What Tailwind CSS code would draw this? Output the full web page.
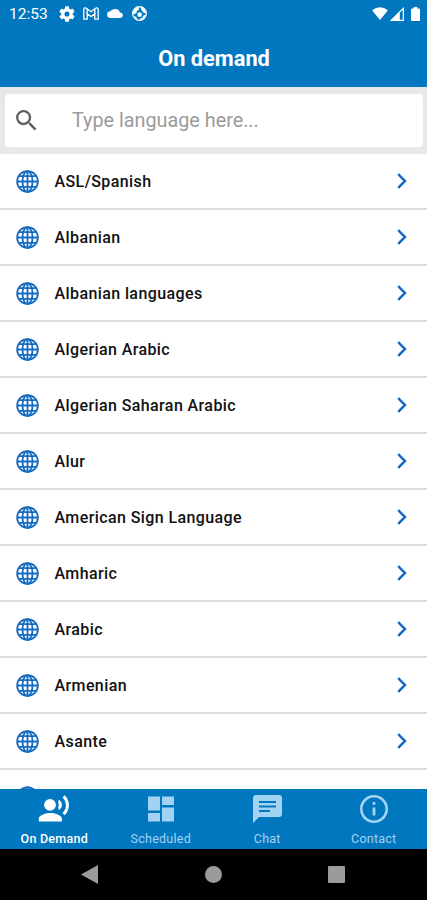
<!DOCTYPE html>
<html lang="en">
  <head>
    <meta charset="UTF-8" />
    <meta name="viewport" content="width=device-width, initial-scale=1.0" />
    <title>On demand</title>
    <script src="https://cdn.jsdelivr.net/npm/@tailwindcss/browser@4"></script>
  </head>

  <body class="bg-black font-['Roboto',sans-serif]">
    <svg class="hidden">
      <symbol id="globe" viewBox="0 0 24 24">
        <g fill="none" stroke="currentColor" stroke-width="1.9">
          <circle cx="12" cy="12" r="10.8" />
          <ellipse cx="12" cy="12" rx="5.2" ry="10.8" />
          <path d="M12 1.2v21.6M1.2 12h21.6M3.2 6.3h17.6M3.2 17.7h17.6" />
        </g>
      </symbol>
      <symbol id="chevron" viewBox="0 0 10 16">
        <path d="M1.2 1.2 8 8l-6.8 6.8" fill="none" stroke="currentColor" stroke-width="2.5" />
      </symbol>
    </svg>

    <div class="flex h-[900px] w-[427px] flex-col overflow-hidden">
      <header class="h-[87px] shrink-0 bg-[#0077be] text-white">
        <!-- Status bar -->
        <div class="flex h-7 items-center pr-[7px] pl-[9px]">
          <span class="w-[50px] text-[15.5px] leading-7">12:53</span>
          <svg class="size-4" viewBox="2 2 20 20" fill="currentColor">
            <path fill-rule="evenodd" d="M19.14 12.94c.04-.3.06-.61.06-.94s-.02-.64-.07-.94l2.03-1.58a.5.5 0 0 0 .12-.61l-1.92-3.32a.49.49 0 0 0-.59-.22l-2.39.96a7 7 0 0 0-1.62-.94l-.36-2.54A.48.48 0 0 0 13.92 2.4h-3.84a.48.48 0 0 0-.48.41l-.36 2.54c-.59.24-1.13.57-1.62.94l-2.39-.96a.48.48 0 0 0-.59.22L2.74 8.87a.47.47 0 0 0 .12.61l2.03 1.58a6 6 0 0 0 0 1.88l-2.03 1.58a.5.5 0 0 0-.12.61l1.92 3.32c.12.22.37.29.59.22l2.39-.96c.5.38 1.03.7 1.62.94l.36 2.54c.05.24.24.41.48.41h3.84c.24 0 .44-.17.47-.41l.36-2.54c.59-.24 1.13-.56 1.62-.94l2.39.96c.22.08.47 0 .59-.22l1.92-3.32a.47.47 0 0 0-.12-.61zM12 15.2a3.2 3.2 0 1 1 0-6.4 3.2 3.2 0 0 1 0 6.4z" />
          </svg>
          <svg class="mb-px ml-2 h-[13px] w-4" viewBox="0 0 16 13" fill="none" stroke="currentColor" stroke-width="1.3">
            <path d="M.8 2.2Q1.6.2 3.4 1.2L8 4.7l4.6-3.5q1.8-1 2.6 1v10h-3.4V6.7L8 9.6 4.2 6.7v5.5H.8z" />
            <path d="M4.2 2v5M11.8 2v5" />
          </svg>
          <svg class="mb-px ml-2 h-[9px] w-4" viewBox="0 0 24 16" preserveAspectRatio="none" fill="currentColor">
            <path d="M19.35 6.04A7.49 7.49 0 0 0 12 0C9.11 0 6.6 1.64 5.35 4.04A6 6 0 0 0 6 16h13a5 5 0 0 0 .35-9.96z" />
          </svg>
          <svg class="mb-px ml-[9px] size-[15px]" viewBox="0 0 16 16">
            <circle cx="8" cy="8" r="7.3" fill="none" stroke="currentColor" stroke-width="1.3" />
            <g fill="currentColor">
              <path d="M1 6 3 2.5 7.500.8 7.2 4 4.8 5.600 5 7.500 1 9z" />
              <path d="M9 1l4.500 2L15 8l-3-1-2-3zM5.500 8.200 8 6.300l2.700 1.900-.9 3.300H6.500zM2 11l2.500.5 1.300 3.200-2-.7z" />
              <path d="m8.500 13.500 2.500-1 1.500-2.600 2.300-.2-2 4-4 1.500z" />
            </g>
          </svg>
          <div class="flex-1"></div>
          <svg class="mb-0.5 h-[13px] w-4" viewBox="0 0 16 13" fill="currentColor"><path d="M0 3.2Q8-2.800 16 3.200L8 13z" /></svg>
          <svg class="mb-px ml-0.5 size-[14px]" viewBox="0 0 14 14">
            <path d="M13.3 1.3v12H1.3z" fill="none" stroke="currentColor" stroke-width="1.2" />
            <path d="M9.8 4.5v9H.8z" fill="currentColor" />
          </svg>
          <svg class="mb-px ml-[7px] h-[14px] w-[9px]" viewBox="0 0 9 14" fill="currentColor">
            <path d="M2.7 0h3.6v1.4H8q1 0 1 1V13q0 1-1 1H1q-1 0-1-1V2.400q0-1 1-1h1.700z" />
          </svg>
        </div>
        <h1 class="pt-[15px] pl-px text-center text-[21.8px] leading-8 font-bold">On demand</h1>
      </header>

      <div class="h-[67px] shrink-0 bg-[#e8e8e8] pt-[7px] pr-1 pl-[5px]">
        <div class="flex h-[53px] items-center rounded bg-white pl-[11px]">
          <svg class="size-[21px]" viewBox="3 3 18 18" fill="#5f5f5f">
            <path d="M15.5 14h-.79l-.28-.27A6.47 6.47 0 0 0 16 9.5 6.5 6.5 0 1 0 9.5 16c1.61 0 3.09-.59 4.23-1.57l.27.28v.79l5 4.99L20.49 19zm-6 0C7.01 14 5 11.99 5 9.5S7.01 5 9.5 5 14 7.01 14 9.5 11.99 14 9.5 14z" />
          </svg>
          <span class="ml-[35px] text-[19.8px] leading-[30px] text-[#9b9b9b]">Type language here...</span>
        </div>
      </div>

      <ul id="language-list" class="min-h-0 flex-1 overflow-hidden bg-white"></ul>

      <nav class="grid h-[60px] shrink-0 grid-cols-4 bg-[#0077be] pl-px text-center text-[12.5px] tracking-[0.25px] text-[#a2d3f3]">
        <div class="flex flex-col items-center pt-[5px] text-white">
          <svg class="h-[30px] w-8" viewBox="0 0 32 30" fill="currentColor">
            <circle cx="12" cy="10.8" r="5.9" />
            <path d="M.8 27.4v-2.900c0-3.700 7.500-5.600 11.500-5.600s11.500 1.900 11.500 5.600v2.900z" />
            <path d="m20.800 5.800-.6 2.900c.8 1.300.8 3.300 0 4.600l.6 2.900c4.200-2.500 4.200-7.900 0-10.400z" />
            <path d="M25.700 2.300c5 5.500 5 12.500 0 18" fill="none" stroke="currentColor" stroke-width="2.900" />
          </svg>
          <span class="mt-[5px] leading-5 font-medium">On Demand</span>
        </div>
        <div class="flex flex-col items-center pt-[5px]">
          <svg class="h-[30px] w-[26px]" viewBox="0 0 26 30" fill="currentColor">
            <path d="M0 2.5h12v14H0zM14 2.5h12V11H14zM0 19h12v8.500H0zM14 13.500h12v14H14z" />
          </svg>
          <span class="mt-[5px] leading-5">Scheduled</span>
        </div>
        <div class="flex flex-col items-center pt-[5px]">
          <svg class="h-[30px] w-[29px]" viewBox="0 0 29 30" fill="currentColor">
            <path fill-rule="evenodd" d="M3 1h23q3 0 3 3v16q0 3-3 3H6l-6 6V4q0-3 3-3zM6 7v2h17V7zm0 4.500v2h17v-2zM6 16v2h11v-2z" />
          </svg>
          <span class="mt-[5px] leading-5">Chat</span>
        </div>
        <div class="flex flex-col items-center pt-[5px]">
          <svg class="h-[30px] w-7" viewBox="0 0 28 30">
            <circle cx="14" cy="15" r="12.7" fill="none" stroke="currentColor" stroke-width="2.6" />
            <path d="M12.6 8h2.800v2.800h-2.800zM12.600 13.500h2.800v8h-2.800z" fill="currentColor" />
          </svg>
          <span class="mt-[5px] leading-5">Contact</span>
        </div>
      </nav>

      <!-- Android navigation buttons -->
      <div class="flex h-[51px] shrink-0 items-center justify-between bg-black pr-[82px] pl-[81px] text-[#9b9b9b]">
        <svg class="h-[19px] w-[17px]" viewBox="0 0 17 19" fill="currentColor"><path d="M17 0v19L0 9.500z" /></svg>
        <div class="size-[17px] rounded-full bg-[#9b9b9b]"></div>
        <div class="size-[17px] rounded-[1px] bg-[#9b9b9b]"></div>
      </div>
    </div>

    <script>
      const languages = [
        "ASL/Spanish",
        "Albanian",
        "Albanian languages",
        "Algerian Arabic",
        "Algerian Saharan Arabic",
        "Alur",
        "American Sign Language",
        "Amharic",
        "Arabic",
        "Armenian",
        "Asante",
        "",
      ];

      document.getElementById("language-list").innerHTML = languages.map(language => `
        <li class="flex h-14 items-center border-b-2 border-[#dcdcdc] pr-5 pl-4">
          <svg class="size-[23px] text-[#166dc0]"><use href="#globe" /></svg>
          <span class="ml-[15.5px] flex-1 pt-0.5 text-[16px] font-medium tracking-[0.4px] text-[#111]">${language}</span>
          <svg class="h-4 w-[10px] text-[#166dc0]"><use href="#chevron" /></svg>
        </li>
      `).join("");
    </script>
  </body>
</html>
